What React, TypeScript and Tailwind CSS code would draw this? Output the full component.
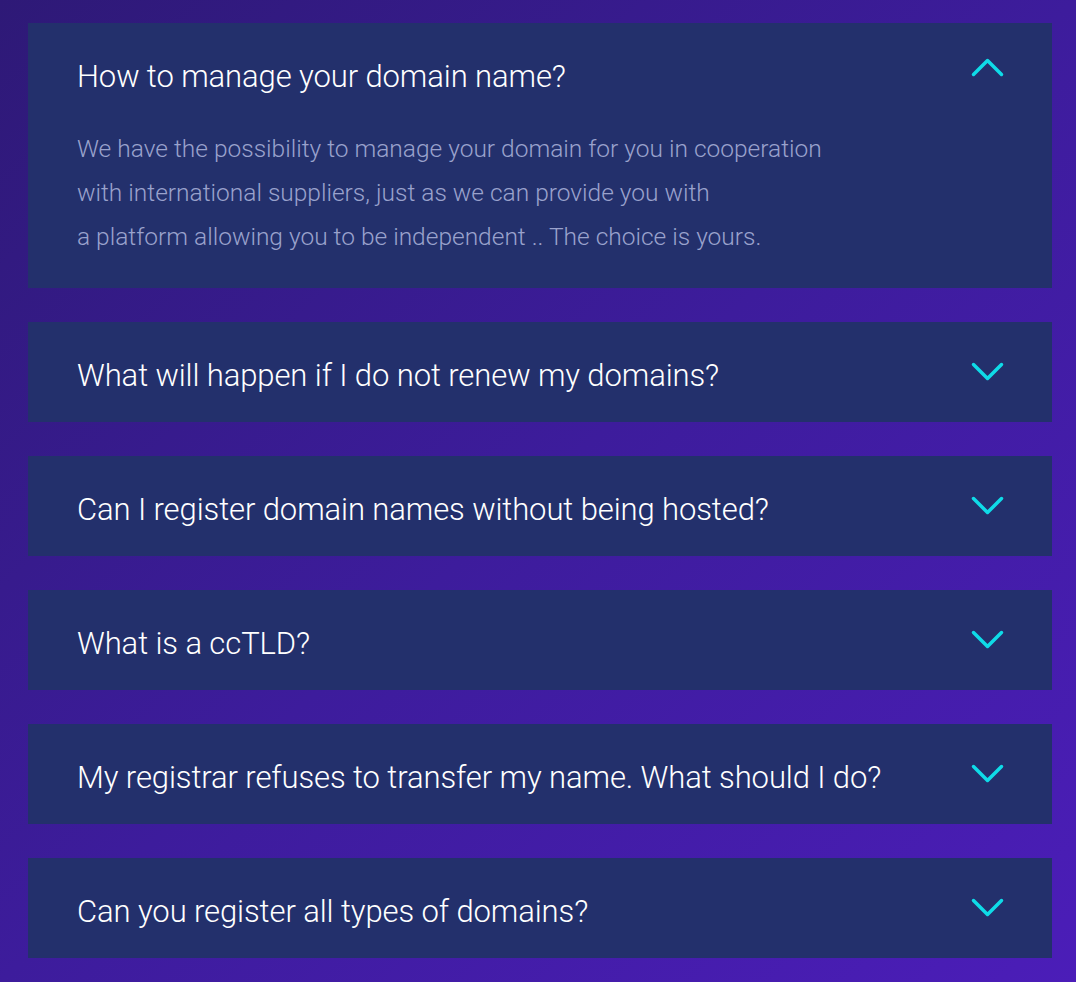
import React, { useState } from "react";

const faqs = [
  {
    q: "How to manage your domain name?",
    a: [
      "We have the possibility to manage your domain for you in cooperation",
      "with international suppliers, just as we can provide you with",
      "a platform allowing you to be independent .. The choice is yours.",
    ],
  },
  { q: "What will happen if I do not renew my domains?", a: [] },
  { q: "Can I register domain names without being hosted?", a: [] },
  { q: "What is a ccTLD?", a: [] },
  { q: "My registrar refuses to transfer my name. What should I do?", a: [] },
  { q: "Can you register all types of domains?", a: [] },
];

const Chevron = ({ up }: { up: boolean }) => (
  <svg
    width="33"
    height="22"
    viewBox="0 0 33 22"
    fill="none"
    className={up ? "shrink-0 -translate-y-[6px]" : "shrink-0"}
  >
    <path
      d={up ? "M2.5 18.5 L16.5 4.5 L30.5 18.5" : "M2.5 3.5 L16.5 17.5 L30.5 3.5"}
      stroke="#0fdbe8"
      strokeWidth="3.5"
      strokeLinecap="round"
      strokeLinejoin="round"
    />
  </svg>
);

export default function App() {
  const [open, setOpen] = useState(0);
  return (
    <div className="min-h-[982px] w-full bg-gradient-to-br from-[#2e1977] via-[#3d1c9c] to-[#4b1db8] pl-[28px] pr-[24px] pt-[23px] pb-[24px] font-['Roboto',sans-serif]">
      <div className="flex flex-col gap-[34px]">
        {faqs.map((f, i) => (
          <div key={i} className="bg-[#23306c]">
            <button
              onClick={() => setOpen(open === i ? -1 : i)}
              className="flex w-full items-center justify-between pl-[49px] pr-[48px] h-[100px] text-left"
            >
              <span className="pt-[8px] text-[31px] font-light text-white tracking-[-0.1px]">{f.q}</span>
              <Chevron up={open === i} />
            </button>
            {open === i && (
              <div className="mt-[4px] pl-[49px] pb-[29px] text-[24.5px] font-light leading-[44px] text-[#9aa2cc]">
                {f.a.map((l, j) => (
                  <div key={j}>{l}</div>
                ))}
              </div>
            )}
          </div>
        ))}
      </div>
    </div>
  );
}
